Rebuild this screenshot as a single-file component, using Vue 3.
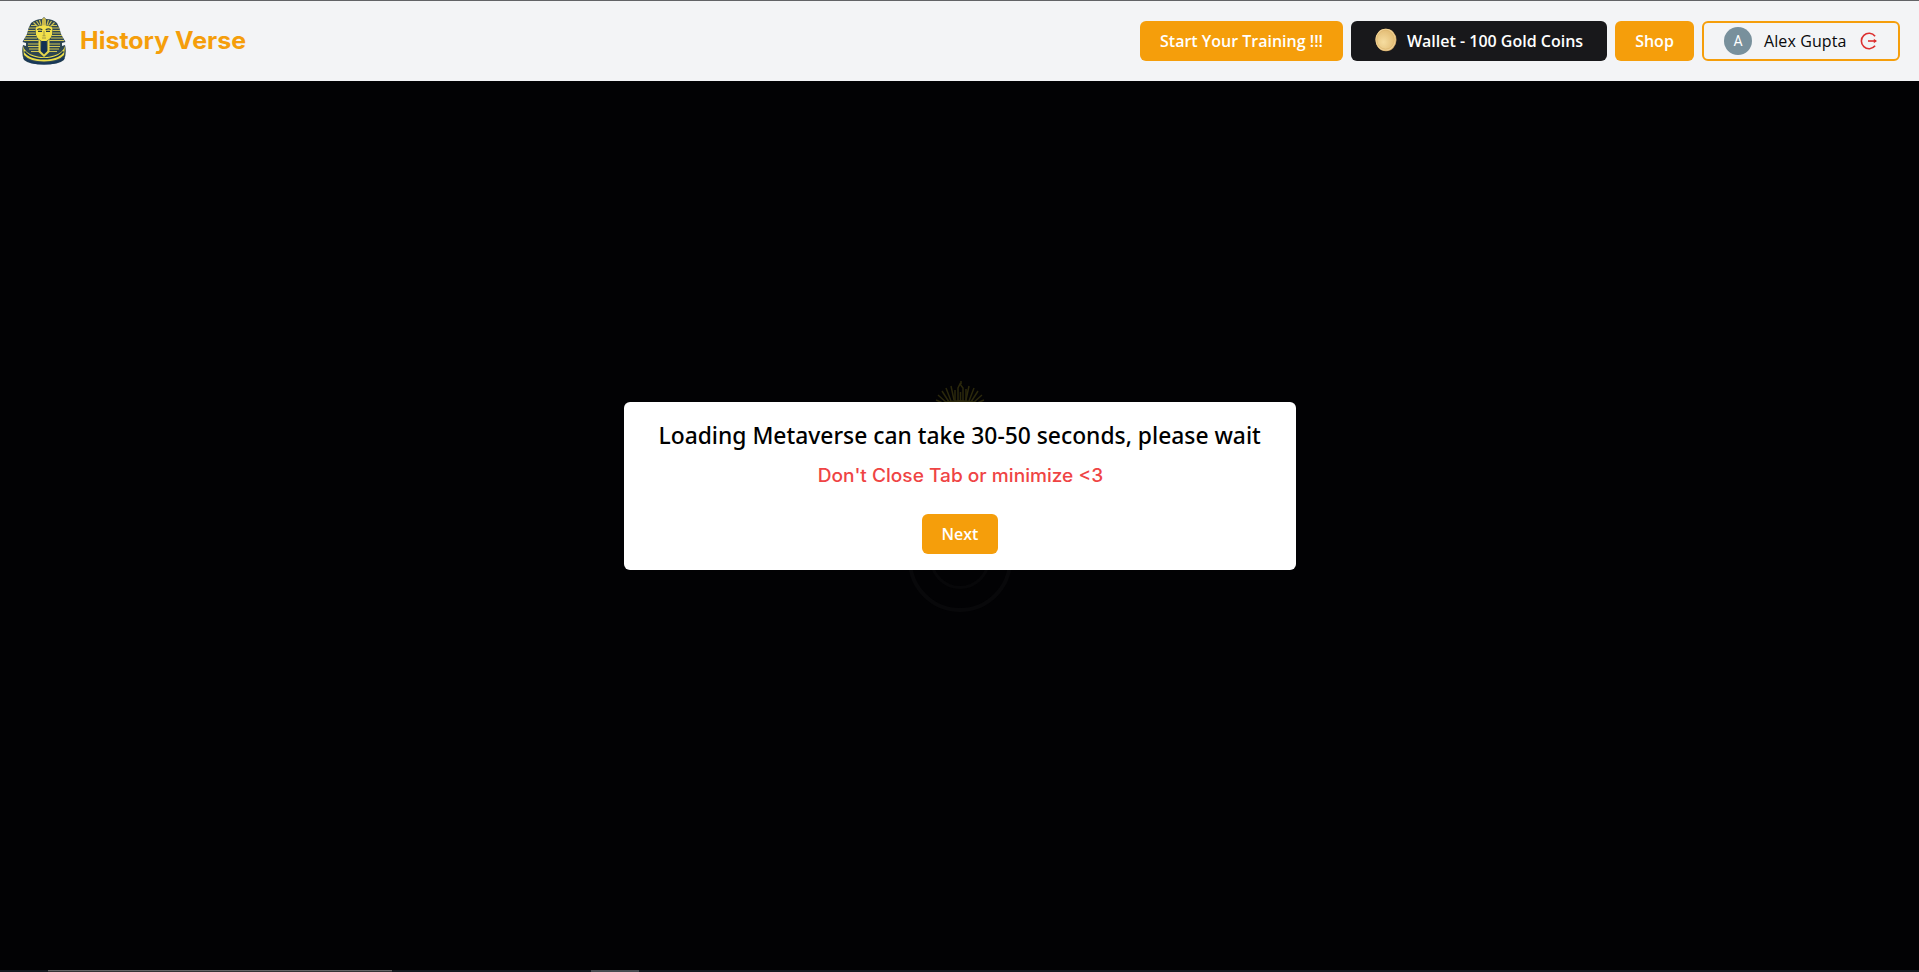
<script setup>
const stripes = [
  { y: 8.5, a: 9, b: 14 },
  { y: 11, a: 7, b: 13.5 },
  { y: 13.5, a: 6, b: 13.5 },
  { y: 16, a: 5.5, b: 13.5 },
  { y: 18.5, a: 4, b: 14 },
  { y: 21, a: 3, b: 15 },
  { y: 23.5, a: 2, b: 16.5 },
  { y: 27, a: 6, b: 17.5 },
  { y: 29.5, a: 6, b: 18 },
  { y: 32, a: 7, b: 18 },
  { y: 34.5, a: 9, b: 18.5 },
]
</script>

<template>
  <div class="page">
    <header class="bar">
      <div class="brand">
        <svg class="logo" viewBox="0 0 44 48" aria-hidden="true">
          <path d="M9 6Q14 2 20 2L22 0L24 2Q31 2 35 6Q38 11 39 17L43.5 25L40 26V29L43 28Q45 36 42 43Q37 47.5 22 47.5T2 43Q-1 36 1 28L4 29V26L.5 25L5 17Q6 11 9 6Z" fill="#2d4651" />
          <g stroke="#cfc453" stroke-width="1.2" fill="none">
            <path v-for="s in stripes" :key="s.y" :d="`M${s.a} ${s.y}H${s.b}M${44 - s.b} ${s.y}H${44 - s.a}`" />
            <path d="M11.5 5.5l4 4M14.5 4l3 4.5M17.5 3l1.5 5M32.5 5.5l-4 4M29.5 4l-3 4.5M26.5 3L25 8" />
          </g>
          <path d="M20 9V2.5Q22-1 24 2.5V9Z" fill="#c9b84c" />
          <path d="M13.5 10.5Q22 6 30.5 10.5L30 18Q29 21.5 26 23Q22 26 18 23Q15 21.5 14 18Z" fill="#f3e14b" />
          <path d="M15.2 12.6Q17.5 11 20.3 12.8M23.7 12.8Q26.5 11 28.8 12.6M16 14.4H20M24 14.4H28" stroke="#293f44" stroke-width="1.1" fill="none" />
          <path d="M22 14V18.6M20.5 18.8H23.5M20 21H24" stroke="#8d8740" stroke-width=".8" fill="none" />
          <path d="M16.5 22L18.5 24V34L22 37.5L25.5 34V24L27.5 22V35L22 40L16.5 35Z" fill="#e6d64c" />
          <path d="M19.7 24H24.3L25 34L22 36.5L19 34Z" fill="#122f53" />
          <path d="M1 29Q3 36 12 38.5Q22 42 32 38.5Q41 36 43 29L42 38Q36 44.5 22 44.5T2 38Z" fill="#eadc48" />
          <path d="M2.5 34.5Q7 40 15 41.2Q22 42.4 29 41.2Q37 40 41.5 34.5" stroke="#123253" stroke-width="1.4" fill="none" />
          <path d="M2 41Q8 46.5 22 46.5T42 41" stroke="#17375a" stroke-width="2" fill="none" />
        </svg>
        <span class="name">History Verse</span>
      </div>
      <nav class="actions">
        <button class="btn train">Start Your Training !!!</button>
        <button class="btn wallet">
          <svg class="coin" viewBox="0 0 22 24" aria-hidden="true">
            <defs>
              <radialGradient id="coin-face" cx="38%" cy="62%" r="65%">
                <stop offset="0" stop-color="#f6dda0" />
                <stop offset="1" stop-color="#e3bd76" />
              </radialGradient>
            </defs>
            <ellipse cx="11" cy="12" rx="10.5" ry="11.2" fill="#cda362" />
            <ellipse cx="10.6" cy="11.7" rx="10.1" ry="10.9" fill="#f1d397" />
            <ellipse cx="10.6" cy="11.7" rx="8.8" ry="9.6" fill="url(#coin-face)" stroke="#d9b067" stroke-width=".6" />
          </svg>
          <span>Wallet - 100 Gold Coins</span>
        </button>
        <button class="btn shop">Shop</button>
        <div class="user">
          <span class="avatar">A</span>
          <span class="user-name">Alex Gupta</span>
          <svg class="exit" viewBox="0 0 18 18" fill="none" stroke="#dc2f2f" stroke-width="1.6" aria-hidden="true">
            <path d="M15.1 4.2A7.7 7.7 0 1 0 15.1 13.8" />
            <path d="M8 9H16" />
            <path d="M13.8 6.7L17 9L13.8 11.3Z" fill="#dc2f2f" stroke="none" />
          </svg>
        </div>
      </nav>
    </header>

    <main class="stage">
      <svg class="loader" viewBox="0 0 160 240" aria-hidden="true">
        <g stroke="#2b280c" stroke-width="1.5" fill="none">
          <path d="M56 26l9 4M58 21l9 8M62 17l7 11M66 14l5 13M71 12l3 14M104 26l-9 4M102 21l-9 8M98 17l-7 11M94 14l-5 13M89 12l-3 14" />
          <path d="M78 28V14l2-4 3 4V28M75 27V16M86 27V15M80.500 18V28M81 10V7" />
          <path d="M60 30Q80 25 100 30" stroke-width="3" />
        </g>
        <circle cx="80" cy="186" r="50" fill="none" stroke="#08080a" stroke-width="4" />
        <circle cx="80" cy="185" r="28.500" fill="none" stroke="#070709" stroke-width="3" />
      </svg>
      <section class="dialog">
        <h1><span>Loading Metaverse can take 30-50 seconds, please wait</span></h1>
        <p><span>Don't Close Tab or minimize &lt;3</span></p>
        <button class="btn next">Next</button>
      </section>
    </main>
    <footer class="edge"><i class="long"></i><i class="short"></i></footer>
  </div>
</template>

<style>
body { margin: 0; background: #020204; }
</style>

<style scoped>
* { box-sizing: border-box; }
.page {
  display: flex;
  flex-direction: column;
  width: 1919px;
  height: 972px;
  overflow: hidden;
  background: #020204;
  font-family: "Open Sans", "Noto Sans", sans-serif;
}
.bar {
  display: flex;
  align-items: center;
  justify-content: space-between;
  flex: none;
  height: 81px;
  padding: 0 19px 0 22px;
  border-top: 1px solid #626366;
  background: #f3f4f6;
}
.brand { display: flex; align-items: center; }
.logo { width: 44px; height: 48px; }
.name {
  margin-left: 14px;
  color: #f59e0b;
  font: 700 24px/32px Inter, sans-serif;
  white-space: nowrap;
  transform: scaleX(1.04);
  transform-origin: left;
}
.actions { display: flex; gap: 8px; }
.btn {
  display: flex;
  align-items: center;
  justify-content: center;
  height: 40px;
  padding: 0;
  border: 0;
  border-radius: 6px;
  background: #f59e0b;
  color: #fff;
  font: 600 16px/24px "Open Sans", "Noto Sans", sans-serif;
  white-space: nowrap;
}
.train { width: 203px; }
.wallet { width: 256px; gap: 10px; background: #18181b; }
.coin { width: 22px; height: 24px; margin-top: -2px; }
.shop { width: 79px; }
.user {
  display: flex;
  align-items: center;
  width: 198px;
  height: 40px;
  padding-left: 20px;
  border: 2px solid #f59e0b;
  border-radius: 6px;
  color: #09090b;
  font-size: 16px;
  line-height: 24px;
}
.avatar {
  width: 28px;
  height: 28px;
  border-radius: 50%;
  background: #78909c;
  color: #fff;
  font: 400 14px/28px Roboto, sans-serif;
  text-align: center;
}
.user-name { width: 83px; margin-left: 12px; letter-spacing: 0.1px; white-space: nowrap; }
.exit { width: 18px; height: 18px; margin-left: 13px; }
.stage {
  position: relative;
  display: flex;
  flex: 1;
  justify-content: center;
  align-items: flex-start;
}
.loader { position: absolute; left: 880px; top: 293px; width: 160px; height: 240px; }
.dialog {
  position: relative;
  display: flex;
  flex-direction: column;
  align-items: center;
  width: 672px;
  height: 168px;
  margin-top: 321px;
  margin-left: 1px;
  padding-top: 15px;
  border-radius: 6px;
  background: #fff;
}
h1 {
  margin: 0;
  color: #000;
  font: 500 24px/36px "Noto Sans", "Open Sans", sans-serif;
  white-space: nowrap;
  transform: scaleX(0.951);
}
p {
  margin: 9px 0 0;
  color: #ef4444;
  font: 500 18px/28px Inter, sans-serif;
  white-space: nowrap;
  transform: scaleX(1.062);
}
.next { width: 76px; margin-top: 24px; flex: none; }
.edge { display: flex; flex: none; height: 2px; background: #14191f; }
.long { width: 344px; margin-left: 48px; border-top: 1px solid #656466; background: #353235; }
.short { width: 48px; margin-left: 199px; background: #494b50; }
</style>
